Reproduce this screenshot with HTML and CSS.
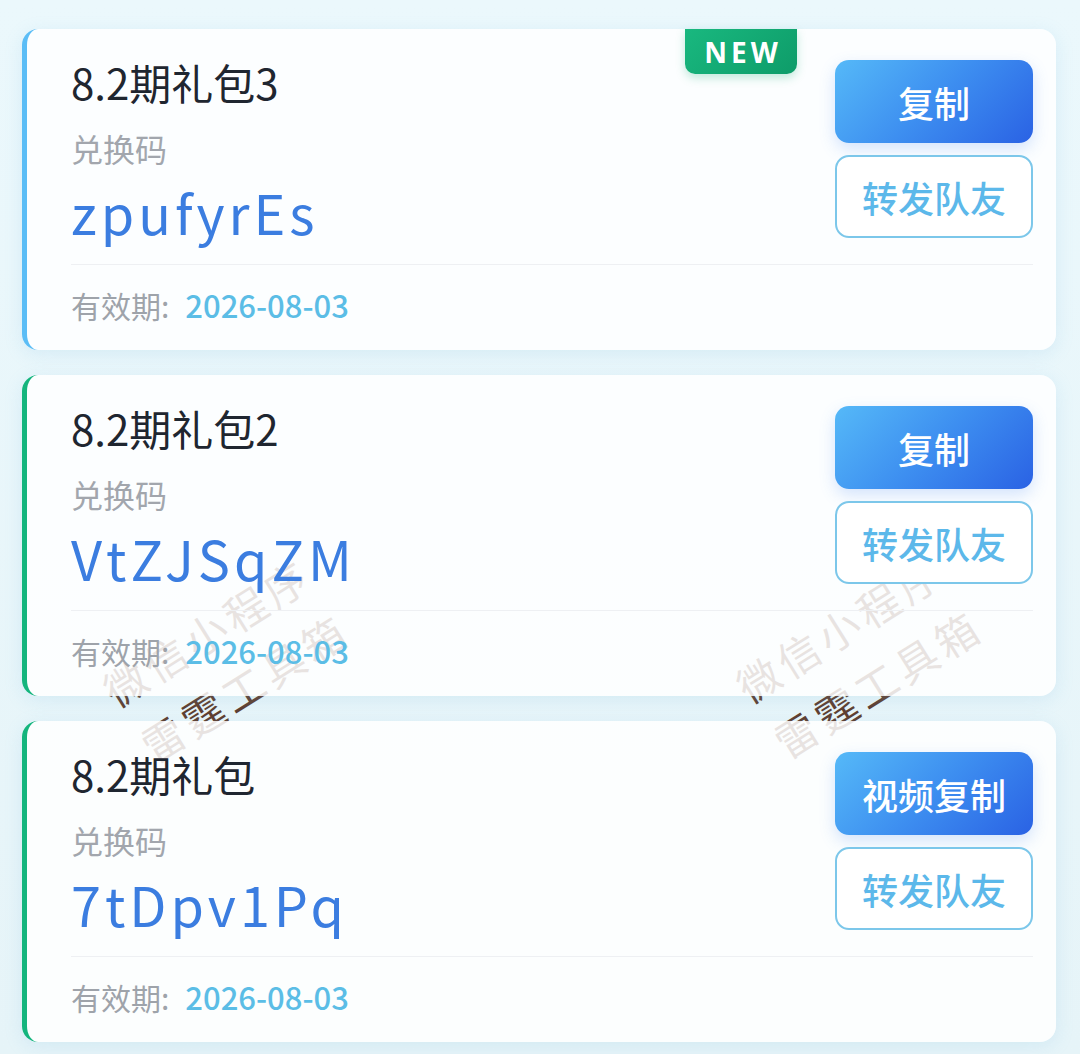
FILE: index.html
```html
<!DOCTYPE html>
<html lang="zh-CN">
<head>
<meta charset="utf-8">
<title>兑换码</title>
<link rel="stylesheet" href="styles.css">
</head>
<body>
<div class="page">
  <div class="watermarks">
    <div class="wm wm-left"><div>微信小程序</div><div class="wm-l2">雷霆工具箱</div></div>
    <div class="wm wm-right"><div>微信小程序</div><div class="wm-l2">雷霆工具箱</div></div>
  </div>

  <div class="card card-blue">
    <div class="badge">NEW</div>
    <div class="top">
      <div class="info">
        <div class="title">8.2期礼包3</div>
        <div class="label">兑换码</div>
        <div class="code">zpufyrEs</div>
      </div>
      <div class="actions">
        <div class="btn btn-primary">复制</div>
        <div class="btn btn-outline">转发队友</div>
      </div>
    </div>
    <div class="foot"><span class="foot-label">有效期:</span><span class="date">2026-08-03</span></div>
  </div>

  <div class="card card-green">
    <div class="top">
      <div class="info">
        <div class="title">8.2期礼包2</div>
        <div class="label">兑换码</div>
        <div class="code">VtZJSqZM</div>
      </div>
      <div class="actions">
        <div class="btn btn-primary">复制</div>
        <div class="btn btn-outline">转发队友</div>
      </div>
    </div>
    <div class="foot"><span class="foot-label">有效期:</span><span class="date">2026-08-03</span></div>
  </div>

  <div class="card card-green">
    <div class="top">
      <div class="info">
        <div class="title">8.2期礼包</div>
        <div class="label">兑换码</div>
        <div class="code">7tDpv1Pq</div>
      </div>
      <div class="actions">
        <div class="btn btn-primary">视频复制</div>
        <div class="btn btn-outline">转发队友</div>
      </div>
    </div>
    <div class="foot"><span class="foot-label">有效期:</span><span class="date">2026-08-03</span></div>
  </div>
</div>
</body>
</html>
```

FILE: styles.css
```css
* { box-sizing: border-box; }
html, body { margin: 0; padding: 0; }
body {
  width: 1080px;
  height: 1054px;
  overflow: hidden;
  font-family: "Noto Sans CJK SC", "Noto Sans", sans-serif;
  background: linear-gradient(180deg, #ebf8fc 0%, #e6f4f8 100%);
}
.page {
  position: relative;
  padding: 29px 24px 0 22px;
  display: flex;
  flex-direction: column;
  gap: 25px;
}
.watermarks {
  position: absolute;
  inset: 0;
  z-index: 0;
  pointer-events: none;
}
.wm {
  position: absolute;
  transform-origin: 0 0;
  transform: rotate(-32deg);
  color: #5e3d2e;
  font-size: 42px;
  font-weight: 400;
  letter-spacing: 5px;
  line-height: 67px;
  white-space: nowrap;
}
.wm-l2 { padding-left: 3px; }
.wm-left { left: 89px; top: 665px; }
.wm-right { left: 722px; top: 661px; }

.card {
  position: relative;
  z-index: 1;
  width: 1034px;
  height: 321px;
  background: rgba(255, 255, 255, 0.86);
  border-radius: 16px;
  border-left: 5px solid #5bbdf6;
  padding: 31px 23px 0 44px;
  box-shadow: 0 4px 18px rgba(120, 190, 225, 0.18);
}
.card-green { border-left-color: #14b57d; }
.badge {
  position: absolute;
  top: 0;
  left: 658px;
  width: 112px;
  height: 45px;
  border-radius: 0 0 10px 10px;
  background: linear-gradient(135deg, #19b87f 0%, #0e9c69 100%);
  box-shadow: 0 4px 10px rgba(20, 170, 110, 0.25);
  color: #fff;
  font-family: "Noto Sans", "Noto Sans CJK SC", sans-serif;
  font-weight: 700;
  font-size: 28px;
  letter-spacing: 4px;
  text-indent: 4px;
  display: flex;
  align-items: center;
  justify-content: center;
}
.top {
  display: flex;
  justify-content: space-between;
  align-items: flex-start;
  height: 186px;
}
.info { display: flex; flex-direction: column; }
.title {
  font-size: 42px;
  line-height: 44px;
  color: #1f2630;
}
.label {
  margin-top: 22px;
  font-size: 32px;
  line-height: 44px;
  color: #a2a6ad;
}
.code {
  margin-top: 10px;
  font-size: 54px;
  line-height: 64px;
  letter-spacing: 4px;
  color: #3b7de0;
}
.actions {
  display: flex;
  flex-direction: column;
  gap: 12px;
}
.btn {
  width: 198px;
  height: 83px;
  border-radius: 14px;
  display: flex;
  align-items: center;
  justify-content: center;
  font-size: 36px;
  font-weight: 500;
}
.btn-primary {
  color: #fff;
  background: linear-gradient(135deg, #55b9f8 0%, #3d8ef0 50%, #2a62e4 100%);
  box-shadow: 0 6px 16px rgba(70, 130, 240, 0.22);
}
.btn-outline {
  color: #5cb8ea;
  background: #fff;
  border: 2px solid #7cc7ea;
}
.foot {
  margin-top: 18px;
  border-top: 1px solid #eef0f3;
  padding-top: 20px;
  font-size: 30px;
  line-height: 40px;
  display: flex;
  align-items: baseline;
}
.foot-label { color: #9ea3aa; }
.date { color: #5bbde6; font-weight: 500; font-size: 31px; margin-left: 16px; }
```
